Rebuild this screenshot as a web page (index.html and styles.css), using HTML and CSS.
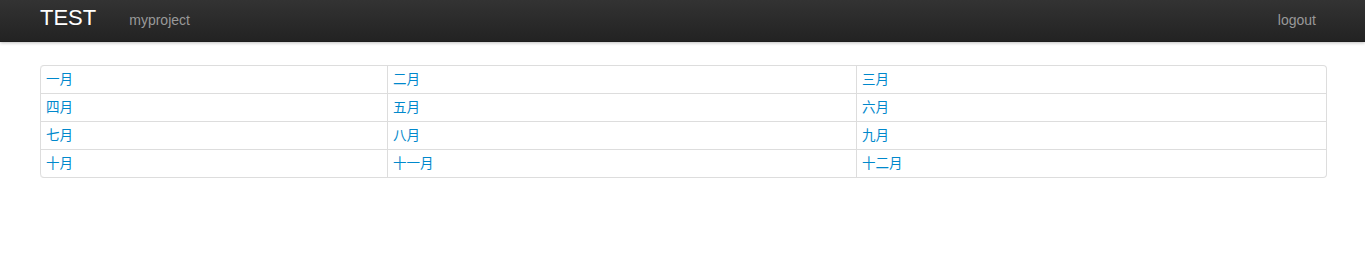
FILE: index.html
```html
<!DOCTYPE html>
<html lang="zh">
<head>
    <meta charset="UTF-8">
    <meta name="viewport" content="width=device-width, initial-scale=1.0">
    <title>TEST</title>
    <link rel="stylesheet" href="styles.css">
</head>
<body>

    <!-- Top navbar -->
    <div class="navbar">
        <div class="navbar-inner">
            <a class="brand" href="#">TEST</a>
            <ul class="nav">
                <li><a href="#">myproject</a></li>
            </ul>
            <ul class="nav nav-right">
                <li><a href="#">logout</a></li>
            </ul>
        </div>
    </div>

    <!-- Months -->
    <div class="container">
        <table class="months">
            <tr>
                <td class="col-1"><a href="#">一月</a></td>
                <td class="col-2"><a href="#">二月</a></td>
                <td><a href="#">三月</a></td>
            </tr>
            <tr>
                <td><a href="#">四月</a></td>
                <td><a href="#">五月</a></td>
                <td><a href="#">六月</a></td>
            </tr>
            <tr>
                <td><a href="#">七月</a></td>
                <td><a href="#">八月</a></td>
                <td><a href="#">九月</a></td>
            </tr>
            <tr>
                <td><a href="#">十月</a></td>
                <td><a href="#">十一月</a></td>
                <td><a href="#">十二月</a></td>
            </tr>
        </table>
    </div>

</body>
</html>
```

FILE: styles.css
```css
body {
    margin: 0;
    font-family: "Liberation Sans", Arial, "Noto Sans CJK SC", sans-serif;
    font-size: 13px;
    line-height: 18px;
    color: #333333;
    background: #ffffff;
}

a {
    color: #0088cc;
    text-decoration: none;
}

.navbar {
    position: relative;
    z-index: 2;
}

.navbar-inner {
    display: flex;
    align-items: flex-start;
    height: 42px;
    padding: 0 39px 0 40px;
    background: linear-gradient(to bottom, #333333, #222222);
    box-shadow: 0 1px 3px rgba(0, 0, 0, 0.25), inset 0 -1px 0 rgba(0, 0, 0, 0.1);
}

.brand {
    font-size: 22px;
    line-height: 36px;
    color: #ffffff;
    padding-right: 23px;
}

.nav {
    display: flex;
    list-style: none;
    margin: 0;
    padding: 0;
}

.nav a {
    display: block;
    padding: 11px 10px 10px;
    color: #999999;
    line-height: 19px;
    font-size: 14px;
}

.nav-right {
    margin-left: auto;
}

.container {
    padding: 23px 38px 0 40px;
}

.months {
    width: 100%;
    border-collapse: separate;
    border-spacing: 0;
    border: 1px solid #dddddd;
    border-left: 0;
    border-radius: 4px;
}

.months td {
    padding: 4px 5px;
    line-height: 19px;
    font-size: 13.5px;
    border-top: 1px solid #dddddd;
    border-left: 1px solid #dddddd;
    text-align: left;
    vertical-align: top;
}

.months tr:first-child td {
    border-top: 0;
}

.months tr:first-child td:first-child {
    border-top-left-radius: 4px;
}

.months tr:last-child td:first-child {
    border-bottom-left-radius: 4px;
}

.months .col-1 {
    width: 336px;
}

.months .col-2 {
    width: 458px;
}
```
